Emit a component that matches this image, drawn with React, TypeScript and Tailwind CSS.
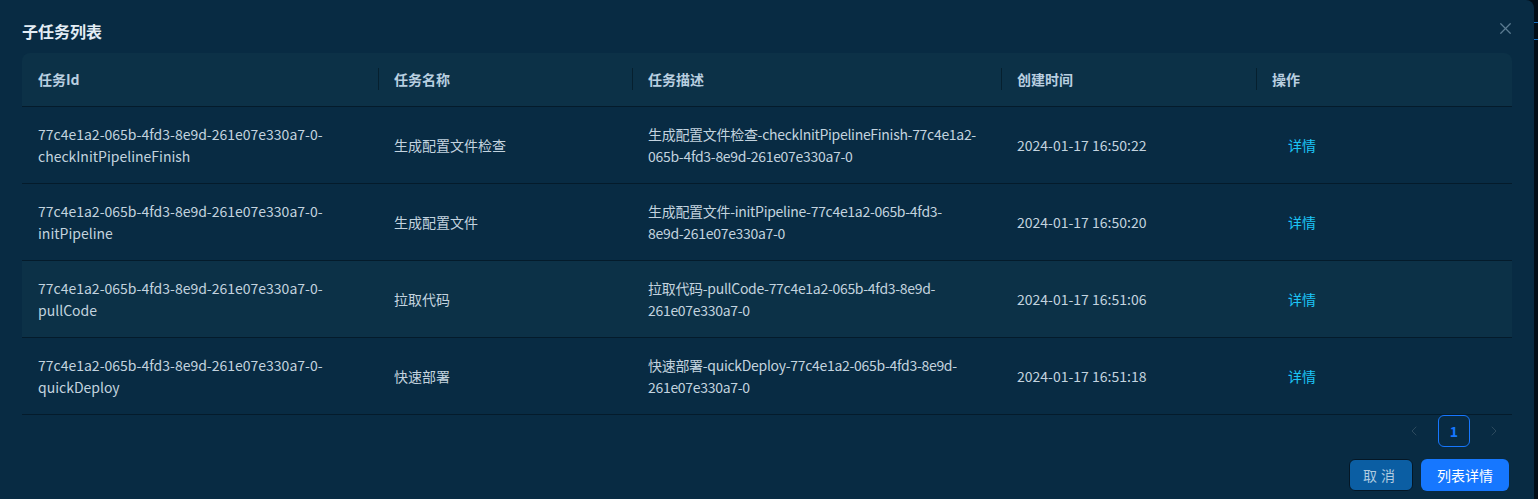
import { X, ChevronLeft, ChevronRight } from "lucide-react";

const rows = [
  {
    id: ["77c4e1a2-065b-4fd3-8e9d-261e07e330a7-0-", "checkInitPipelineFinish"],
    name: "生成配置文件检查",
    desc: ["生成配置文件检查-checkInitPipelineFinish-77c4e1a2-", "065b-4fd3-8e9d-261e07e330a7-0"],
    time: "2024-01-17 16:50:22",
  },
  {
    id: ["77c4e1a2-065b-4fd3-8e9d-261e07e330a7-0-", "initPipeline"],
    name: "生成配置文件",
    desc: ["生成配置文件-initPipeline-77c4e1a2-065b-4fd3-", "8e9d-261e07e330a7-0"],
    time: "2024-01-17 16:50:20",
  },
  {
    id: ["77c4e1a2-065b-4fd3-8e9d-261e07e330a7-0-", "pullCode"],
    name: "拉取代码",
    desc: ["拉取代码-pullCode-77c4e1a2-065b-4fd3-8e9d-", "261e07e330a7-0"],
    time: "2024-01-17 16:51:06",
  },
  {
    id: ["77c4e1a2-065b-4fd3-8e9d-261e07e330a7-0-", "quickDeploy"],
    name: "快速部署",
    desc: ["快速部署-quickDeploy-77c4e1a2-065b-4fd3-8e9d-", "261e07e330a7-0"],
    time: "2024-01-17 16:51:18",
  },
];

const cols = ["w-[356px]", "w-[254px]", "w-[369px]", "w-[255px]", "flex-1"];
const heads = ["任务Id", "任务名称", "任务描述", "创建时间", "操作"];

const App = () => {
  return (
    <div
      className="flex h-[499px] w-[1538px] bg-[#020e18] overflow-hidden"
      style={{ fontFamily: '"Noto Sans CJK SC", "Noto Sans", sans-serif' }}
    >
      <div className="flex w-[1534px] flex-col rounded-tr-lg bg-[#082b43] px-[22px]">
        {/* title bar */}
        <div className="flex h-[53px] items-center justify-between">
          <h2 className="pt-[8px] text-[16px] font-bold text-[#e3edf5]">子任务列表</h2>
          <X className="mr-[-3px] mt-[3px] h-[19px] w-[19px] text-[#5b7b91]" strokeWidth={1.6} />
        </div>

        {/* table */}
        <div className="overflow-hidden rounded-t-lg">
          <div className="flex h-[54px] items-center border-b border-[#041b2b] bg-[#0c3147] text-[14px] font-bold text-[#b9cfe0]">
            {heads.map((h, i) => (
              <div key={h} className={`${cols[i]} relative flex h-full items-center px-4`}>
                {i > 0 && <span className="absolute left-0 top-[15px] h-[22px] w-px bg-[#06202f]" />}
                {h}
              </div>
            ))}
          </div>
          {rows.map((r, i) => (
            <div
              key={r.name}
              className={`flex h-[77px] items-center border-b border-[#041b2b] text-[14px] leading-[22px] text-[#c3d3df] ${
                i === 2 ? "bg-[#0c3147]" : "bg-[#082b43]"
              }`}
            >
              <div className={`${cols[0]} px-4`}>
                <div className="whitespace-nowrap">{r.id[0]}</div>
                <div className="whitespace-nowrap">{r.id[1]}</div>
              </div>
              <div className={`${cols[1]} px-4`}>{r.name}</div>
              <div className={`${cols[2]} px-4`}>
                <div className="whitespace-nowrap tracking-[-0.3px]">{r.desc[0]}</div>
                <div className="whitespace-nowrap tracking-[-0.3px]">{r.desc[1]}</div>
              </div>
              <div className={`${cols[3]} px-4`}>{r.time}</div>
              <div className={`${cols[4]} px-4`}>
                <span className="pl-4 text-[#1cc4f6]">详情</span>
              </div>
            </div>
          ))}
        </div>

        {/* pagination */}
        <div className="flex items-center justify-end gap-[8px] pr-[2px]">
          <button className="flex h-8 w-8 items-center justify-center text-[#2c4a5e]">
            <ChevronLeft className="h-4 w-4" strokeWidth={1.5} />
          </button>
          <button className="flex h-8 w-8 items-center justify-center rounded-md border border-[#1677ff] text-[14px] font-bold text-[#1677ff]">
            1
          </button>
          <button className="flex h-8 w-8 items-center justify-center text-[#2c4a5e]">
            <ChevronRight className="h-4 w-4" strokeWidth={1.5} />
          </button>
        </div>

        {/* footer */}
        <div className="mt-[12px] flex justify-end gap-2 pr-[3px]">
          <button className="h-8 w-[64px] rounded-md border border-[#041726] bg-[#0b5ea3] text-[14px] tracking-[4px] text-[#b0cbe0]">
            取消
          </button>
          <button className="h-8 w-[88px] rounded-md bg-[#1677ff] text-[14px] text-white">列表详情</button>
        </div>
      </div>
      <div className="flex w-[4px] flex-col">
        <div className="mt-[22px] h-px bg-[#1670c0]" />
        <div className="mt-[16px] h-px bg-[#1670c0]" />
      </div>
    </div>
  );
};

export default App;
